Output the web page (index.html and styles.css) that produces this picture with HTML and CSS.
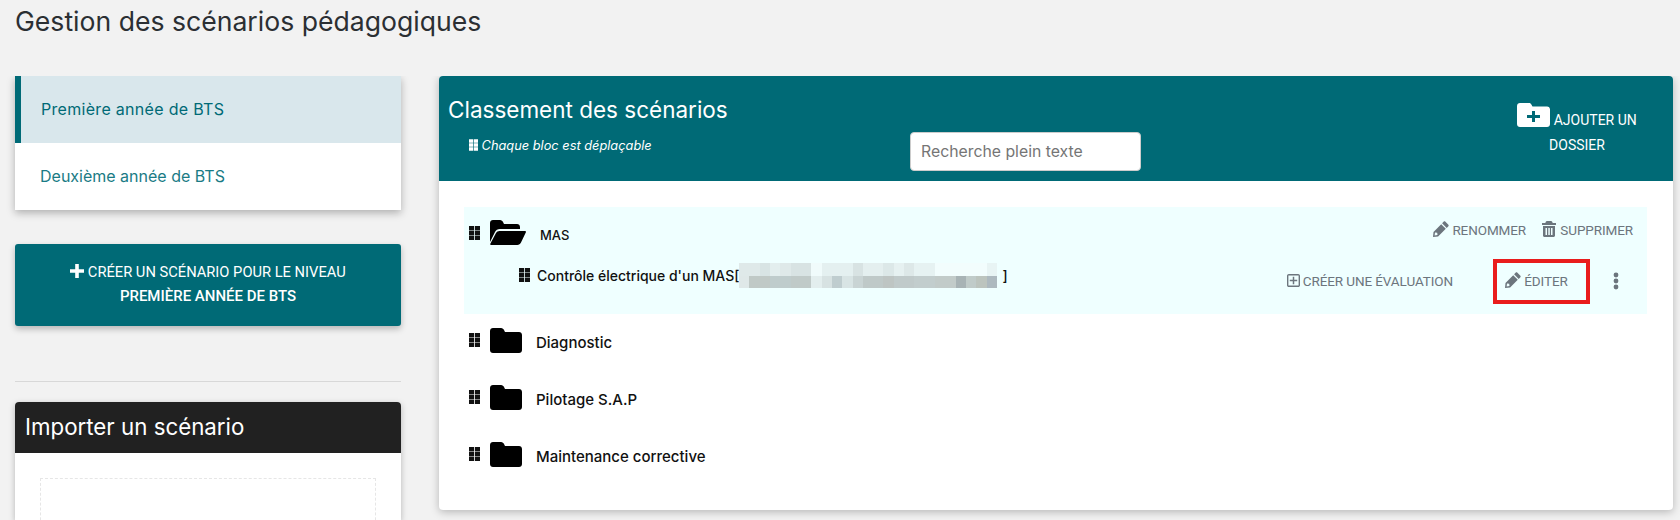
FILE: index.html

```html
<!DOCTYPE html>
<html lang="fr">
<head>
  <meta charset="UTF-8">
  <title>Gestion des scénarios pédagogiques</title>
  <link rel="stylesheet" href="styles.css">
</head>
<body>
  <svg class="defs" width="0" height="0">
    <symbol id="grip" viewBox="0 0 11 14"><path d="M0 0h5v4.300H0zM5.800 0H11v4.300H5.800zM0 4.850h5v4.300H0zM5.800 4.850H11v4.300H5.800zM0 9.700h5V14H0zM5.800 9.700H11V14H5.800z"/></symbol>
    <symbol id="folder" viewBox="0 0 32 25"><path d="M3 0h8c1.500 0 2.500 1 3 2l1 2h14c1.700 0 3 1.300 3 3v15c0 1.700-1.300 3-3 3H3c-1.700 0-3-1.300-3-3V3C0 1.300 1.300 0 3 0z"/></symbol>
    <symbol id="pencil" viewBox="0 0 16 16"><path d="M12.200.6l3.200 3.200c.4.400.4 1 0 1.400l-1.700 1.700-4.600-4.600L10.800.6c.4-.4 1-.4 1.400 0zM8.200 3.200l4.600 4.600-7.700 7.700L0 16l.5-5.100zM2 11.500l-.4 2.900 2.900-.4-.3-2.200z"/></symbol>
  </svg>

  <h1 class="page-title">Gestion des scénarios pédagogiques</h1>

  <div class="layout">
    <aside class="side">
      <nav class="levels">
        <a class="level active">Première année de BTS</a>
        <a class="level">Deuxième année de BTS</a>
      </nav>
      <a class="create-btn">
        <span><svg class="plus" viewBox="0 0 14 14"><path d="M5.200 0h3.600v5.200H14v3.600H8.800V14H5.200V8.800H0V5.200h5.200z"/></svg> Créer un scénario pour le niveau</span>
        <strong>Première année de BTS</strong>
      </a>
      <hr class="sep">
      <section class="import">
        <h2>Importer un scénario</h2>
        <div class="import-body"><div class="dropzone"></div></div>
      </section>
    </aside>

    <main class="panel">
      <header class="panel-head">
        <div class="head-left">
          <h2>Classement des scénarios</h2>
          <p><svg class="grip-sm"><use href="#grip"/></svg> <em>Chaque bloc est déplaçable</em></p>
        </div>
        <input class="search" placeholder="Recherche plein texte">
        <a class="add-folder">
          <svg class="add-icon" viewBox="0 0 33 24"><path fill-rule="evenodd" d="M3 0h9c1 0 1.700.5 2.200 1.300L15.500 3.500H30c1.700 0 3 1.300 3 3V21c0 1.700-1.300 3-3 3H3c-1.700 0-3-1.300-3-3V3C0 1.300 1.300 0 3 0zM15 8v4h-5v3h5v4h3v-4h5v-3h-5V8z"/></svg>
          Ajouter un dossier
        </a>
      </header>

      <div class="tree">
        <div class="folder open">
          <div class="folder-row">
            <svg class="grip"><use href="#grip"/></svg>
            <svg class="folder-icon wide" viewBox="0 0 36 25"><path d="M0 22V3c0-1.700 1.300-3 3-3h7c1.500 0 2.500 1 3 2l1 2h13c1.700 0 3 1.300 3 3v2H10c-2.500 0-4 1-5 3zM1 25c-.7 0-1-.5-.7-1.200L6 13c.7-1.300 2-2 3.500-2H35c.8 0 1.200.6.900 1.300L31 22.500c-.8 1.600-2 2.500-3.700 2.500z"/></svg>
            <span class="folder-name mas">MAS</span>
            <div class="actions">
              <a class="action"><svg class="ic"><use href="#pencil"/></svg> Renommer</a>
              <a class="action"><svg class="ic" viewBox="0 0 14 16"><path fill-rule="evenodd" d="M5 0h4c.6 0 1 .3 1.200.8L10.700 2H14v2H0V2h3.300L3.800.8C4 .3 4.400 0 5 0zM1 5h12v9.500c0 .8-.7 1.500-1.500 1.500h-9C1.700 16 1 15.300 1 14.500zM3.500 7v7h1.500V7zM6.300 7v7h1.500V7zM9 7v7h1.500V7z"/></svg> Supprimer</a>
            </div>
          </div>
          <div class="scenario">
            <svg class="grip"><use href="#grip"/></svg>
            <span class="scenario-name">Contrôle électrique d'un MAS[<span class="blurred"></span>]</span>
            <div class="scenario-actions">
              <a class="action"><svg class="ic-sq" viewBox="0 0 14 14"><path fill-rule="evenodd" d="M2 0h10c1.100 0 2 .9 2 2v10c0 1.100-.9 2-2 2H2c-1.100 0-2-.9-2-2V2C0 .9.900 0 2 0zM1.500 1.500v11h11v-11zM6.200 3h1.600v3.200H11v1.600H7.800V11H6.200V7.800H3V6.200h3.200z"/></svg> Créer une évaluation</a>
              <a class="action edit"><svg class="ic"><use href="#pencil"/></svg> Éditer</a>
              <svg class="kebab" viewBox="0 0 6 18"><circle cx="3" cy="3" r="2.400"/><circle cx="3" cy="9" r="2.400"/><circle cx="3" cy="15" r="2.400"/></svg>
            </div>
          </div>
        </div>
        <div class="folder-row closed">
          <svg class="grip"><use href="#grip"/></svg>
          <svg class="folder-icon"><use href="#folder"/></svg>
          <span class="folder-name">Diagnostic</span>
        </div>
        <div class="folder-row closed">
          <svg class="grip"><use href="#grip"/></svg>
          <svg class="folder-icon"><use href="#folder"/></svg>
          <span class="folder-name">Pilotage S.A.P</span>
        </div>
        <div class="folder-row closed">
          <svg class="grip"><use href="#grip"/></svg>
          <svg class="folder-icon"><use href="#folder"/></svg>
          <span class="folder-name">Maintenance corrective</span>
        </div>
      </div>
    </main>
  </div>
</body>
</html>
```

FILE: styles.css

```css
html, body { margin: 0; height: 520px; overflow: hidden; }
body { background: #f2f2f2; font-family: "Inter", "Roboto", sans-serif; color: #111; }
.defs { position: absolute; }
a { display: block; }

.page-title { margin: 0; padding: 5px 0 0 15px; height: 76px; box-sizing: border-box; font-size: 26.600px; line-height: 32px; font-weight: 400; color: #2b2f33; }
.layout { display: flex; align-items: flex-start; padding-left: 15px; gap: 38px; height: 444px; overflow: hidden; }

.side { width: 386px; flex: none; }
.levels { background: #fff; box-shadow: 0 3px 8px rgba(0,0,0,.28); }
.level { height: 67px; line-height: 67px; padding-left: 25px; font-size: 16px; color: #1a7b85; }
.level.active { background: #d9e7ec; border-left: 6px solid #006a76; padding-left: 20px; letter-spacing: .3px; color: #006a76; }

.create-btn { margin-top: 34px; height: 82px; box-sizing: border-box; padding-top: 16px; background: #006a76; color: #fff; border-radius: 3px; text-align: center; text-transform: uppercase; font-family: "Roboto", sans-serif; font-size: 14.700px; line-height: 24px; box-shadow: 0 3px 6px rgba(0,0,0,.25); }
.create-btn span, .create-btn strong { display: block; font-weight: 400; }
.create-btn strong { font-size: 15px; font-weight: 500; }
.plus { width: 14px; height: 14px; fill: #fff; vertical-align: -1px; }
.sep { border: 0; border-top: 1px solid #d8d8d8; margin: 55px 0 20px; }

.import { border-radius: 4px 4px 0 0; background: #fff; box-shadow: 0 2px 6px rgba(0,0,0,.25); }
.import h2 { margin: 0; height: 51px; line-height: 50px; padding-left: 10px; background: #212121; color: #fff; font-size: 22.300px; font-weight: 400; border-radius: 4px 4px 0 0; }
.import-body { padding: 25px 25px 0; height: 67px; box-sizing: border-box; overflow: hidden; }
.dropzone { height: 60px; border: 1px dashed #e6e6e6; }

.panel { width: 1234px; height: 434px; flex: none; background: #fff; border-radius: 4px; box-shadow: 0 2px 8px rgba(0,0,0,.25); overflow: hidden; }
.panel-head { display: flex; align-items: flex-start; height: 105px; background: #006a76; color: #fff; }
.head-left { width: 471px; padding: 19px 0 0 9px; box-sizing: border-box; }
.head-left h2 { margin: 0; font-size: 22.500px; line-height: 30px; font-weight: 400; }
.head-left p { margin: 12px 0 0 21px; font-size: 12.800px; line-height: 18px; }
.grip-sm { width: 9px; height: 12px; fill: #fff; vertical-align: -1px; }
.search { width: 231px; height: 39px; margin-top: 56px; box-sizing: border-box; padding: 0 10px; border: 1px solid #ccc; border-radius: 4px; background: #fff; font: 15.800px "Inter", sans-serif; }
.search::placeholder { color: #757575; }
.add-folder { width: 132px; margin: 27px 0 0 370px; text-align: center; text-transform: uppercase; font-family: "Roboto", sans-serif; font-size: 14px; line-height: 25px; }
.add-icon { width: 33px; height: 24px; fill: #fff; vertical-align: -2px; }

.tree { padding: 26px 26px 0 25px; }
.folder { background: #efffff; height: 107px; }
.folder-row { display: flex; align-items: center; height: 57px; padding-left: 5px; }
.folder.open .folder-row { height: 56px; }
.grip { width: 11px; height: 14px; fill: #111; flex: none; margin-top: -4px; }
.folder-icon { width: 32px; height: 25px; flex: none; margin: -5px 0 0 10px; }
.folder-icon.wide { width: 36px; }
.folder-name { margin-left: 14px; font-size: 15px; font-weight: 500; }
.folder-name.mas { margin-left: 14px; font-size: 13px; }
.actions { margin: -12px 0 0 auto; display: flex; gap: 15px; padding-right: 14px; }
.action { color: #6c757d; font-family: "Roboto", sans-serif; font-size: 13.500px; letter-spacing: -.1px; text-transform: uppercase; white-space: nowrap; }
.ic { width: 16px; height: 16px; fill: #6c757d; vertical-align: -2px; }
.ic-sq { width: 13px; height: 13px; fill: #6c757d; vertical-align: -1px; }

.scenario { display: flex; align-items: center; height: 36px; padding-left: 55px; }
.scenario .grip { margin-top: -12px; }
.scenario-name { margin: -12px 0 0 7px; font-size: 14px; font-weight: 500; display: flex; align-items: center; }
/* stands for the pixelated part of the scenario name */
.blurred { width: 258px; height: 25px; margin-right: 5px;
  background:
    linear-gradient(90deg, #dfe8e8 0 4%, #c0c9c6 4% 12%, #bfcccc 12% 20%, #c0cac8 20% 28%, #e3eeee 28% 32%, #d7e2e2 32% 36%, #bfcdcf 36% 40%, #d8e4e4 40% 44%, #c9d4d4 44% 48%, #bfc9c8 48% 56%, #bec5c3 56% 60%, #c0caca 60% 68%, #c2cdcd 68% 76%, #c2cbc9 76% 84%, #a8b3b5 84% 88%, #c0cbc9 88% 92%, #bcc4be 92% 96%, #adb9bf 96% 100%) bottom/100% 12px no-repeat,
    linear-gradient(90deg, #dfe9e9 0 8%, #d8e4e4 8% 12%, #e3eeee 12% 16%, #dfe9e9 16% 20%, #d8e3e3 20% 28%, #f0fbfb 28% 32%, #e4f0f0 32% 44%, #d8e3e3 44% 48%, #e4efef 48% 56%, #dce8e8 56% 60%, #e6f1f1 60% 64%, #dde8e8 64% 68%, #e6f2f2 68% 76%, #f2fdfd 76% 96%, #e8f4f4 96% 100%) top/100% 13px no-repeat;
}
.scenario-actions { margin-left: auto; display: flex; align-items: center; padding-right: 28px; }
.edit { margin-left: 40px; border: 4px solid #e91c1c; width: 97px; height: 45px; box-sizing: border-box; line-height: 37px; padding-left: 8px; }
.kebab { width: 6px; height: 18px; fill: #6c757d; margin-left: 23px; }

.closed .grip { margin-top: -6px; }
```
